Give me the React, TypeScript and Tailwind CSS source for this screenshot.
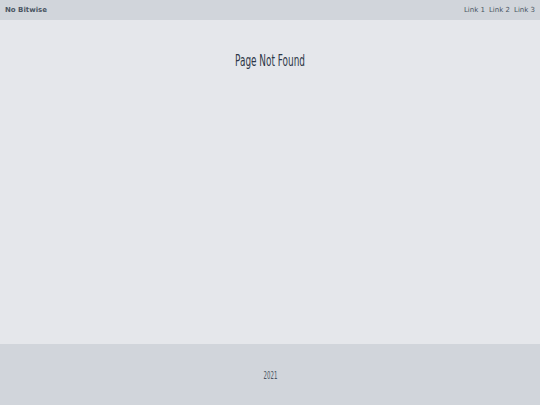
import React from "react";

export default function App() {
  return (
    <div className="flex h-[405px] w-full flex-col bg-[#e5e7eb]">
      <header className="flex h-[20px] items-center justify-between bg-[#d1d5db] px-[5px] text-[7px] text-[#4b5563]" style={{ fontFamily: '"DejaVu Sans", sans-serif' }}>
        <div className="font-bold text-[#4b5563]">No Bitwise</div>
        <nav className="flex gap-[4px]">
          <span>Link 1</span>
          <span>Link 2</span>
          <span>Link 3</span>
        </nav>
      </header>
      <main className="flex flex-1 justify-center pt-[32px]">
        <h1 className="inline-block h-[18px] scale-x-[0.66] text-[15px] leading-[18px] text-[#2d3748]" style={{ fontFamily: '"DejaVu Sans Condensed", "DejaVu Sans", sans-serif' }}>Page Not Found</h1>
      </main>
      <footer className="flex h-[61px] items-center justify-center bg-[#d1d5db] pt-[2px] text-[#4b5563]" style={{ fontFamily: '"DejaVu Sans Condensed", "DejaVu Sans", sans-serif' }}>
        <span className="inline-block scale-x-[0.6] text-[10px] leading-[12px]">2021</span>
      </footer>
    </div>
  );
}
